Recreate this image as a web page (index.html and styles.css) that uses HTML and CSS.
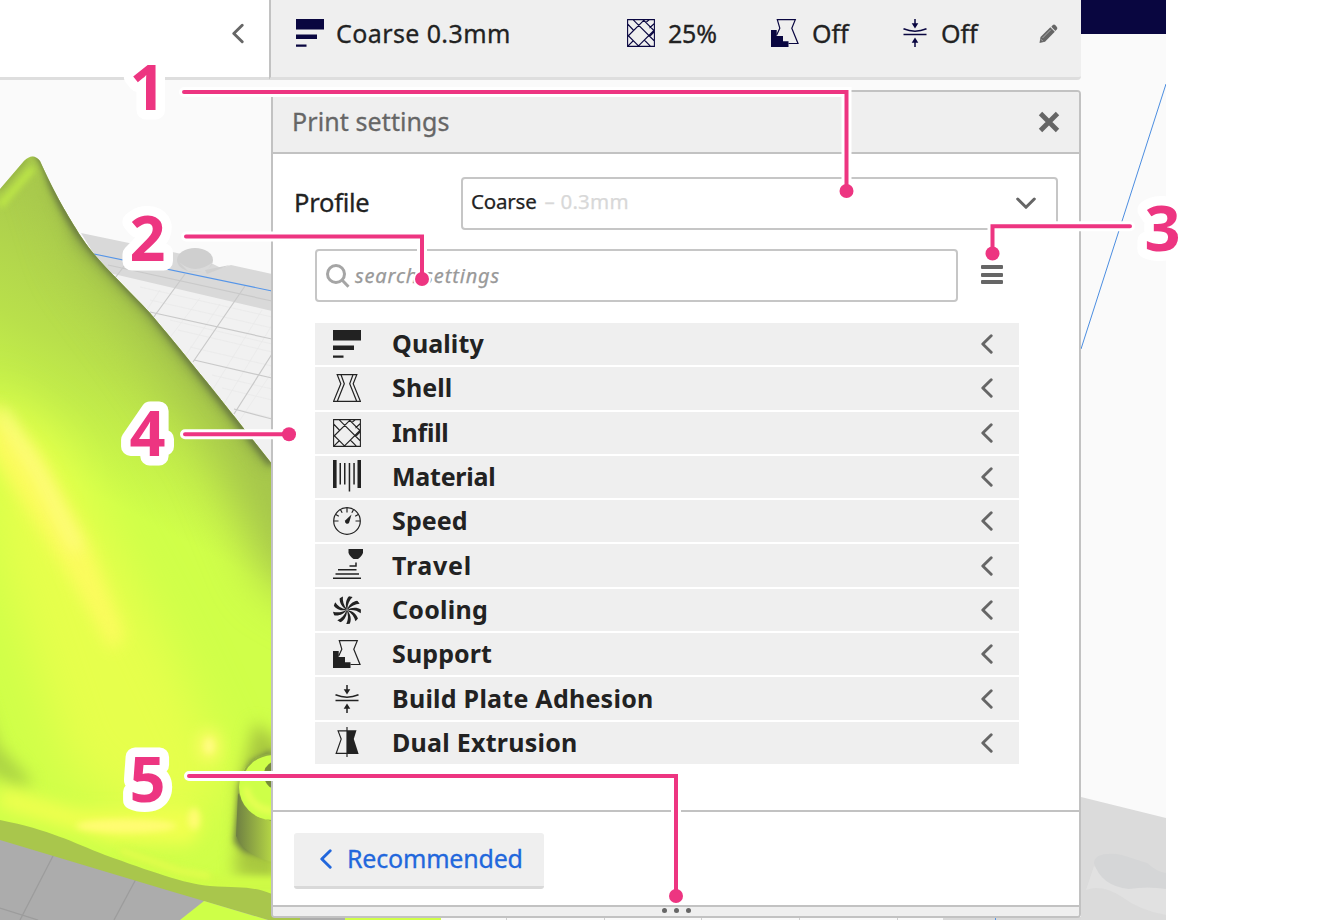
FILE: index.html
```html
<!DOCTYPE html>
<html lang="en">
<head>
<meta charset="utf-8">
<title>Print settings</title>
<link rel="stylesheet" href="styles.css">
</head>
<body>
<svg class="defs" width="0" height="0" aria-hidden="true">
  <symbol id="i-quality" viewBox="0 0 28 28"><path fill="currentColor" d="M0 0h28v10.500H0zM0 15.500h21v4.500H0zM0 25.500h10.500v2.200H0z"/></symbol>
  <symbol id="i-shell" viewBox="0 0 28 28"><path fill="none" stroke="currentColor" stroke-width="1.200" d="M4.200.7h19.600l-3.600 9 7.200 17.600H.6l7.200-17.600zM8 .7l3.300 9-7 17.600M20 .7l-3.300 9 7 17.600"/></symbol>
  <symbol id="i-infill" viewBox="0 0 28 28"><path fill="none" stroke="currentColor" stroke-width="1.100" d="M.6.6h26.800v26.800H.6zM6 .6l21.400 21.400M17.500 .6.6 17.500M.6 5l5.700 6M.6 16l11.400 11.400M27.400 11 11 27.400M16 .6 27.400 12M27.400 4.500l-5 4.500M22.500 .6l-4 3.200M.6 27.400l5.400-5.400M17.300 21l6.300 6.400M22.800 17.400l4.600-4.800"/></symbol>
  <symbol id="i-material" viewBox="0 0 28 32"><path fill="currentColor" d="M0 0h3.600v28H0zM24.500 0H28v28h-3.500zM6.500 3H8v21.500H6.500zM11 3h1.500v21.500H11zM15.700 3h1.500v28.500h-1.500zM20.300 3h1.500v21.500h-1.500z"/></symbol>
  <symbol id="i-speed" viewBox="0 0 28 28"><circle cx="14" cy="14" r="13.300" fill="none" stroke="currentColor" stroke-width="1.200"/><path stroke="currentColor" stroke-width="1.200" d="M14 1v4.500M1 14h4.500M22.500 14H27M2.800 7.500l3 1.700M25.200 7.500l-3 1.700M7.500 2.800l1.700 3M20.500 2.800l-1.700 3"/><path fill="currentColor" d="m18.500 7.500-2.300 8a2.200 2.200 0 1 1-3.800-2.200z"/></symbol>
  <symbol id="i-travel" viewBox="0 0 30 30"><path fill="currentColor" d="M15.500 0H30v3.500c0 2-2.500 4.500-5 6.500h-4.500c-2.500-2-5-4.500-5-6.500z"/><path fill="none" stroke="currentColor" stroke-width="1.500" d="M23 13.500V17h-6.500M5 20.800h18.500M2.500 25h23.500M0 29.200h28"/></symbol>
  <symbol id="i-blade" viewBox="0 0 28 28"><path fill="currentColor" d="M14 13.500C12 9.500 12.700 3.500 16 .2l3.600.8c-3.200 3-5.200 7.200-5.200 12.500z"/></symbol>
  <symbol id="i-cooling" viewBox="0 0 28 28"><use href="#i-blade"/><use href="#i-blade" transform="rotate(40 14 14)"/><use href="#i-blade" transform="rotate(80 14 14)"/><use href="#i-blade" transform="rotate(120 14 14)"/><use href="#i-blade" transform="rotate(160 14 14)"/><use href="#i-blade" transform="rotate(200 14 14)"/><use href="#i-blade" transform="rotate(240 14 14)"/><use href="#i-blade" transform="rotate(280 14 14)"/><use href="#i-blade" transform="rotate(320 14 14)"/></symbol>
  <symbol id="i-support" viewBox="0 0 28 28"><path fill="currentColor" d="M0 11h5.700v6H12v5.300h5.500V28H0z"/><path fill="none" stroke="currentColor" stroke-width="1.200" d="M5.700 16 8.800 9.200 6.300.7h18l-3.500 8.600L27 24.500h-9.500"/></symbol>
  <symbol id="i-adhesion" viewBox="0 0 24 28"><path fill="none" stroke="currentColor" stroke-width="1.500" d="M.5 9.800Q12 14.500 23.500 9.800M.5 15.500h23M12 0v5M12 28v-6"/><path fill="currentColor" d="M8.700 4.200h6.600L12 9.500zM8.700 23.800h6.600L12 18.500z"/></symbol>
  <symbol id="i-dual" viewBox="0 0 24 32"><path fill="none" stroke="currentColor" stroke-width="1.200" d="M12 4H2.800L6 12.500.8 27.300H12M12 0v31"/><path fill="currentColor" d="M12 3.400h9.800L19 12.500l5 15.400H12z"/></symbol>
  <symbol id="i-left" viewBox="0 0 12 20"><path fill="none" stroke="currentColor" stroke-width="2.900" stroke-linecap="round" stroke-linejoin="round" d="m10.200 1.700-8.400 8.300 8.400 8.300"/></symbol>
</svg>

<main class="stage">
  <svg class="scene" width="1166" height="920" viewBox="0 0 1166 920" aria-hidden="true">
    <defs>
      <clipPath id="left"><rect width="272" height="920"/></clipPath>
      <clipPath id="body"><path d="M0 189 24 161Q33 152 40 161C55 194 66 213 82 238 97 261 121 282 150 313 178 346 225 404 245 430L272 464V905Q200 896 140 875T0 828Z"/></clipPath>
      <linearGradient id="skin" gradientUnits="userSpaceOnUse" x1="120" y1="240" x2="10" y2="450"><stop offset="0" stop-color="#aacb4d"/><stop offset=".5" stop-color="#b9e04b"/><stop offset="1" stop-color="#d0ff49"/></linearGradient>
      <linearGradient id="wall" x1="0" x2="1" y1="0" y2="0"><stop offset="0" stop-color="#6e7f43"/><stop offset="1" stop-color="#b5d645"/></linearGradient>
      <filter id="b3" x="-50%" y="-50%" width="200%" height="200%" color-interpolation-filters="sRGB"><feGaussianBlur stdDeviation="3"/></filter>
      <filter id="b8" x="-50%" y="-50%" width="200%" height="200%" color-interpolation-filters="sRGB"><feGaussianBlur stdDeviation="8"/></filter>
      <filter id="b20" x="-50%" y="-50%" width="200%" height="200%" color-interpolation-filters="sRGB"><feGaussianBlur stdDeviation="24"/></filter>
    </defs>
    <rect width="1166" height="920" fill="#fafafa"/>
    <g clip-path="url(#left)">
      <path fill="#f1f1f1" d="M90 268 272 308V470z"/>
      <g stroke="#e8e8e8" stroke-width=".7"><path d="M140 287 272 317M150 300l122 28M170 320l102 24M178 330l94 22M190 347l82 19M212 375l60 14M222 388l50 12M240 410l32 8"/><path d="m160 290-28 42M200 298l-38 50M220 304l-40 60M262 310l-52 84M272 325l-50 82M272 372l-32 48"/></g>
      <path fill="#d9d9d9" d="m81 233 120 25 20 10 10-3 41 9v37L105 272z"/>
      <g stroke="#c9c9c9" stroke-width="1.200" fill="none"><path d="m108 265 164 36M150 312l122 27M194 360l78 18M234 409l38 10M185 274l-32 44M245 286l-52 76M272 354l-38 60M125 265l-10 13"/></g>
      <path stroke="#5595e8" stroke-width="1.200" d="m94 254 178 37"/>
      <ellipse cx="195" cy="260" rx="18" ry="12" fill="#cfcfcf"/><path fill="#dadada" d="M179 262q16 14 34 0l-7 10-18-1z"/><path fill="#d0d0d0" d="m205 270 25-5-23 9z"/>
      <path fill="#acacac" d="M0 835 272 910v10H0z"/>
      <path stroke="#9c9c9c" stroke-width="1.300" d="m54 854-34 66M136 879l-22 41M0 908l38 12"/>
      <g clip-path="url(#body)">
        <path fill="url(#skin)" d="M0 150h272v770H0z"/>
        <path fill="#a5c54b" filter="url(#b20)" d="M40 130 80 260 140 340 215 450 268 580 340 620V360L100 120z"/>
        <path fill="none" stroke="#869d47" stroke-width="22" filter="url(#b8)" d="M60 170 86 236 154 306 276 458"/>
        <path fill="none" stroke="#65753f" stroke-width="7" filter="url(#b3)" d="M36 152Q43 156 52 183C64 210 75 228 86 241 100 260 132 291 154 314L272 464"/>
        <path fill="none" stroke="#8aa643" stroke-width="4" filter="url(#b3)" d="M-2 190 26 158"/>
        <path fill="none" stroke="#bfea46" stroke-width="6" filter="url(#b3)" d="m0 206 33-38"/>
        <path fill="#e6ff4c" filter="url(#b20)" d="m-20 390 80 50 110 210 60 130-60 60-100-70L0 560z"/>
        <path fill="#fffb60" filter="url(#b8)" opacity=".85" d="M-10 400 40 455 90 545 125 635 112 652 65 570-10 450z"/>
        <path fill="none" stroke="#fffc8a" stroke-width="9" filter="url(#b8)" d="m0 410 40 65 38 75"/>
        <path fill="#abd344" filter="url(#b8)" d="m-20 690 18 55 35 38-15 4-38-19z"/>
        <ellipse cx="209" cy="746" rx="11" ry="16" fill="#fffc68" filter="url(#b8)"/>
        <ellipse cx="209" cy="746" rx="5" ry="8" fill="#fffc82" filter="url(#b3)"/>
        <path fill="#f0ff4e" filter="url(#b8)" d="m0 788 80 22h50l60-2 12 15-10 20-80-2-112-34z"/>
        <ellipse cx="126" cy="826" rx="50" ry="7" fill="#fffc72" filter="url(#b3)"/>
        <ellipse cx="194" cy="819" rx="6" ry="11" fill="#fffc72" filter="url(#b3)"/>
        <path fill="#a8c83f" filter="url(#b8)" d="m255 722 24 20v140l-45-6 4-40 2-54z"/>
        <path fill="#6b7b43" filter="url(#b3)" d="m272 750-22 12-11 24-5 56 10 10 28 5V750z"/>
        <path fill="url(#wall)" d="M238 793q13 23 34 28v41q-28-7-36-26z"/>
        <circle cx="272" cy="787" r="33" fill="#ceff48"/><path fill="none" stroke="#f0ff57" stroke-width="5" filter="url(#b3)" d="M246 787q3 22 28 24"/><path fill="none" stroke="#92ae42" stroke-width="2" d="M244 772q8-16 28-18"/><path fill="#758c39" d="M272 762q-9 4-8 15 2 9 8 11z"/>
        <path fill="none" stroke="#cffb46" stroke-width="12" filter="url(#b3)" d="m120 852 70 24 40 7h52"/>
        <path fill="none" stroke="#eaff4f" stroke-width="4" filter="url(#b3)" d="m120 850 60 21 30 5"/>
      </g>
      <path fill="#a9c64c" d="M0 820C50 830 72 842 105 855 150 871 185 884 210 886 240 888 253 886 272 894v27L170 891 0 840z"/>
      <path fill="#ceff48" d="m204 901-24 19h88z"/>
    </g>
    <path fill="#acacac" d="M300 917h45v3h-45z"/><path fill="#d0ff48" d="M345 917h96v3h-96z"/><path fill="#a9c64c" d="M272 917h28v3h-28z"/>
    <path fill="#cfcfcf" d="M506 917h1v3h-1zM604 917h1v3h-1zM701 917h1v3h-1zM799 917h1v3h-1zM897 917h1v3h-1z"/><path fill="#d9d9d9" d="M943 917h140v3H943z"/><path fill="#5595e8" d="M995 917h1v3h-1z"/>
    <path stroke="#4b8de0" stroke-width="1" d="m1166 84-85 265"/>
    <path fill="#dbdbdb" d="m1081 797 85 21v102h-85z"/>
    <path fill="#e1e1e1" d="m1094 866-8 24q16-6 36 7 17 13 44 18v-27l-45-2z"/>
    <path fill="#d5d6d7" d="M1094 863c0-9 14-11 28-8l25 8q10 9 19 10v16q-18-3-37 0-28-3-35-26z"/>
    <path fill="#090640" d="M1081 0h85v34h-85z"/>
  </svg>

  <div class="window">
    <div class="topbar">
      <div class="previous"><svg class="chev" width="12" height="21"><use href="#i-left"/></svg></div>
      <div class="summary">
        <svg class="icon" width="28" height="28"><use href="#i-quality"/></svg><span class="sum-name">Coarse 0.3mm</span>
        <svg class="icon" width="28" height="28"><use href="#i-infill"/></svg><span class="sum-infill">25%</span>
        <svg class="icon" width="28" height="28"><use href="#i-support"/></svg><span class="sum-support">Off</span>
        <svg class="icon" width="24" height="28"><use href="#i-adhesion"/></svg><span class="sum-adhesion">Off</span>
        <svg class="pencil" width="19" height="20" viewBox="0 0 19 20"><path d="m1.500 13 9.800-9.800 4.500 4.600-9.800 9.900L.5 19z"/><path d="m12.300 2.700 1.500-1.600q1.200-1 2.400 0l1.700 1.800q1 1.200 0 2.400l-1.600 1.600z"/><path class="cut" d="m3.500 14 8.300-8.300M2 15.300l1.900 1.900"/></svg>
      </div>
    </div>

    <section class="panel">
      <header class="panel-head"><span>Print settings</span><svg width="22" height="22" viewBox="0 0 22 22"><path d="m2.500 2.500 17 17M19.500 2.500l-17 17"/></svg></header>
      <div class="panel-body">
        <div class="profile">
          <label>Profile</label>
          <div class="select"><span>Coarse</span><span class="muted">– 0.3mm</span><svg width="20" height="13" viewBox="0 0 20 13"><path d="m1.700 2 8.300 8.300L18.300 2"/></svg></div>
        </div>
        <div class="search-row">
          <div class="search"><svg width="24" height="24" viewBox="0 0 24 24"><circle cx="10" cy="10" r="8.500"/><path d="m16.500 16.500 6 6.300"/></svg><span>search settings</span></div>
          <div class="menu"><i></i><i></i><i></i></div>
        </div>
        <ul class="categories">
          <li><svg width="28" height="28"><use href="#i-quality"/></svg><span>Quality</span><svg class="chev" width="12" height="20"><use href="#i-left"/></svg></li>
          <li><svg width="28" height="28"><use href="#i-shell"/></svg><span>Shell</span><svg class="chev" width="12" height="20"><use href="#i-left"/></svg></li>
          <li class="tight"><svg width="28" height="28"><use href="#i-infill"/></svg><span>Infill</span><svg class="chev" width="12" height="20"><use href="#i-left"/></svg></li>
          <li class="tight"><svg class="spool" width="28" height="32"><use href="#i-material"/></svg><span>Material</span><svg class="chev" width="12" height="20"><use href="#i-left"/></svg></li>
          <li><svg width="28" height="28"><use href="#i-speed"/></svg><span>Speed</span><svg class="chev" width="12" height="20"><use href="#i-left"/></svg></li>
          <li class="wide"><svg class="travel" width="30" height="30"><use href="#i-travel"/></svg><span>Travel</span><svg class="chev" width="12" height="20"><use href="#i-left"/></svg></li>
          <li class="loose"><svg width="28" height="28"><use href="#i-cooling"/></svg><span>Cooling</span><svg class="chev" width="12" height="20"><use href="#i-left"/></svg></li>
          <li><svg width="28" height="28"><use href="#i-support"/></svg><span>Support</span><svg class="chev" width="12" height="20"><use href="#i-left"/></svg></li>
          <li class="loose"><svg width="28" height="28"><use href="#i-adhesion"/></svg><span>Build Plate Adhesion</span><svg class="chev" width="12" height="20"><use href="#i-left"/></svg></li>
          <li class="loose"><svg width="28" height="31"><use href="#i-dual"/></svg><span>Dual Extrusion</span><svg class="chev" width="12" height="20"><use href="#i-left"/></svg></li>
        </ul>
      </div>
      <footer class="panel-foot"><div class="button"><svg width="12" height="20"><use href="#i-left"/></svg><span>Recommended</span></div></footer>
      <div class="handle"><i></i><i></i><i></i></div>
    </section>
  </div>

  <svg class="callouts" width="1334" height="920" viewBox="0 0 1334 920">
    <g class="halo"><path d="M184 92H846.500V191M186 236.500H422V279M1130 226.300H992.500V253M185 434.300H289M189 776H676V896"/></g>
    <g class="dot-halo"><circle cx="846.500" cy="191" r="9"/><circle cx="422" cy="279" r="9"/><circle cx="992.500" cy="253.500" r="9"/><circle cx="289" cy="434.300" r="9"/><circle cx="676" cy="896" r="9"/></g>
    <g class="line"><path d="M184 92H846.500V191M186 236.500H422V279M1130 226.300H992.500V253M185 434.300H289M189 776H676V896"/></g>
    <g class="dot"><circle cx="846.500" cy="191" r="7"/><circle cx="422" cy="279" r="7"/><circle cx="992.500" cy="253.500" r="7"/><circle cx="289" cy="434.300" r="7"/><circle cx="676" cy="896" r="7"/></g>
    <g class="num"><text x="147.500" y="110">1</text><text x="147.500" y="261">2</text><text x="1162.500" y="250.500">3</text><text x="147.500" y="456">4</text><text x="147.500" y="801.500">5</text></g>
  </svg>
</main>
</body>
</html>
```
FILE: styles.css
```css
* { box-sizing: border-box; }
body { margin: 0; background: #fff; font-family: "Noto Sans", sans-serif; color: #222; }
.defs { position: absolute; }
.stage { position: relative; width: 1334px; height: 920px; overflow: hidden; }
.scene, .callouts { position: absolute; left: 0; top: 0; }
.window { position: relative; width: 1081px; }
svg { display: block; flex: none; }

.topbar { display: flex; height: 80px; }
.previous { flex: none; width: 269px; height: 80px; background: #fff; border-bottom: 3px solid #dedede; display: flex; justify-content: flex-end; padding: 23px 25px 0 0; }
.chev { color: #666; }
.summary { flex: 1; min-width: 0; height: 80px; background: #efefef; border-left: 2px solid #c2c2c2; border-bottom: 3px solid #dedede; border-radius: 0 0 4px 0; display: flex; align-items: flex-start; padding: 19px 22px 0 25px; font-size: 25px; line-height: 30px; color: #222; }
.summary span { flex: none; white-space: nowrap; line-height: 29px; -webkit-text-stroke: .3px currentColor; }
.icon { color: #090640; }
.sum-name { width: 291px; margin-left: 12px; letter-spacing: .4px; }
.sum-infill { width: 103px; margin-left: 13px; letter-spacing: -.2px; }
.sum-support { width: 91px; margin-left: 13px; }
.sum-adhesion { width: 98px; margin-left: 14px; }
.pencil { margin-top: 5px; fill: #666; }
.pencil .cut { stroke: #efefef; stroke-width: .5; }

.panel { width: 810px; height: 828px; margin: 10px 0 0 271px; background: #fff; border: 2px solid #c2c2c2; border-radius: 4px; display: flex; flex-direction: column; overflow: hidden; }
.panel-head { height: 62px; background: #efefef; border-bottom: 2px solid #c2c2c2; display: flex; align-items: center; justify-content: space-between; padding: 0 19px 0 19px; font-size: 25px; letter-spacing: .1px; color: #666; }
.panel-head span { margin-top: -2px; -webkit-text-stroke: .3px currentColor; }
.panel-head svg { stroke: #666; stroke-width: 4.800; fill: none; }
.panel-body { height: 656px; padding: 23px 21px 0 21px; }
.profile { display: flex; align-items: center; }
.profile label { width: 167px; font-size: 25.500px; letter-spacing: -.25px; margin-top: -3px; -webkit-text-stroke: .3px currentColor; }
.select { flex: 1; height: 53px; border: 2px solid #c6c6c6; border-radius: 4px; display: flex; align-items: center; padding: 0 20px 3px 8px; font-size: 20.500px; }
.select span { margin-top: -2px; letter-spacing: -.2px; -webkit-text-stroke: .25px currentColor; }
.select .muted { color: #d8d8d8; margin-left: 8px; letter-spacing: .2px; }
.select svg { margin-left: auto; margin-top: 2px; fill: none; stroke: #666; stroke-width: 3; stroke-linecap: round; stroke-linejoin: round; }
.search-row { display: flex; align-items: center; margin: 19px 0 0 21px; }
.search { width: 643px; height: 53px; border: 2px solid #c6c6c6; border-radius: 4px; display: flex; align-items: center; padding: 0 8px 0 9px; font-size: 20px; font-style: italic; color: #999; }
.search svg { fill: none; stroke: #a5a5a5; stroke-width: 3; }
.search span { margin-left: 5px; letter-spacing: .85px; -webkit-text-stroke: .25px currentColor; }
.menu { width: 22px; margin-left: 23px; margin-top: -2px; display: grid; gap: 3.500px; }
.menu i { height: 4px; border-radius: 1px; background: #666; }
.categories { list-style: none; width: 704px; margin: 21px 0 0 21px; padding: 0; display: flex; flex-direction: column; gap: 2px; }
.categories li { height: 42.300px; background: #efefef; display: flex; align-items: center; padding: 0 26px 0 18px; font-size: 25px; font-weight: 700; letter-spacing: .1px; }
.categories li span { flex: 1; margin-left: 31px; margin-top: -2px; }
.categories .tight { letter-spacing: -.25px; }
.categories .loose { letter-spacing: .25px; }
.categories .wide { letter-spacing: .75px; }
.categories .travel { margin-right: -2px; margin-top: -3px; }
.categories .spool { margin-top: -3px; }
.panel-foot { height: 95px; border-top: 2px solid #c2c2c2; padding: 21px; }
.button { width: 250px; height: 56px; background: #efefef; border-bottom: 3px solid #d9d9d9; border-radius: 3px; display: flex; align-items: center; padding: 0 0 2px 26px; font-size: 25px; color: #2267dc; }
.button span { margin: -2px 0 0 15px; letter-spacing: -.2px; -webkit-text-stroke: .3px currentColor; }
.handle { height: 11px; border-top: 2px solid #c2c2c2; background: #efefef; display: flex; justify-content: center; align-items: center; gap: 7px; padding-bottom: 2px; }
.handle i { width: 5px; height: 5px; border-radius: 50%; background: #666; }

.halo path { fill: none; stroke: #fff; stroke-width: 10; stroke-linecap: round; }
.line path { fill: none; stroke: #ed3581; stroke-width: 4; stroke-linecap: round; }
.dot-halo circle { fill: #fff; }
.dot circle { fill: #ed3581; }
.num text { font: 700 63px "Noto Sans", sans-serif; text-anchor: middle; fill: #ed3581; stroke: #fff; stroke-width: 19px; stroke-linejoin: round; paint-order: stroke; }
```
